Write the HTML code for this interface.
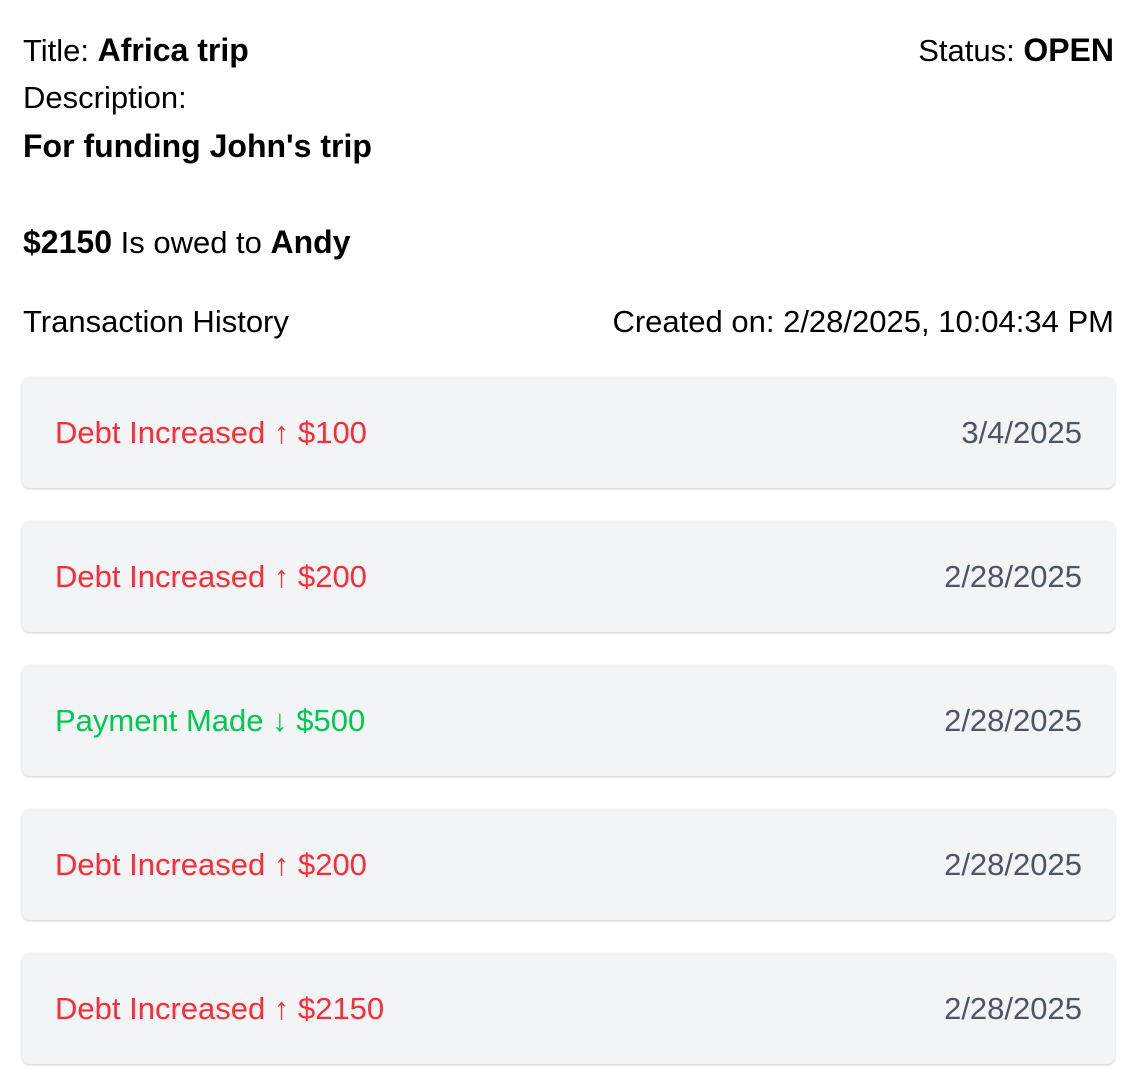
<!DOCTYPE html>
<html><head><meta charset="utf-8"><style>
body{margin:0;background:#fff;font-family:"Liberation Sans",sans-serif;font-size:31px;color:#000;width:1133px;height:1084px;overflow:hidden;position:relative}
.l{position:absolute;left:23px;line-height:48px;white-space:nowrap}
.r{position:absolute;right:19px;line-height:48px;white-space:nowrap}
b{font-weight:700;font-size:32px}
.card{position:absolute;left:22px;width:1093px;height:111px;background:#f3f4f6;border-radius:8px;box-shadow:0 1px 3px rgba(0,0,0,.12),0 1px 2px rgba(0,0,0,.08)}
.card .a{position:absolute;left:33px;top:0;line-height:111px}
.card .d{position:absolute;right:33px;top:0;line-height:111px;color:#4a5565}
.red{color:#fb2c36}.green{color:#00c950}
</style></head><body>
<div class="l" style="top:26px">Title: <b>Africa trip</b></div>
<div class="r" style="top:26px">Status: <b>OPEN</b></div>
<div class="l" style="top:74px">Description:</div>
<div class="l" style="top:122px"><b>For funding John's trip</b></div>
<div class="l" style="top:218px"><b>$2150</b> Is owed to <b>Andy</b></div>
<div class="l" style="top:298px">Transaction History</div>
<div class="r" style="top:298px">Created on: 2/28/2025, 10:04:34 PM</div>
<div class="card" style="top:377px"><span class="a red">Debt Increased ↑ $100</span><span class="d">3/4/2025</span></div>
<div class="card" style="top:521px"><span class="a red">Debt Increased ↑ $200</span><span class="d">2/28/2025</span></div>
<div class="card" style="top:665px"><span class="a green">Payment Made ↓ $500</span><span class="d">2/28/2025</span></div>
<div class="card" style="top:809px"><span class="a red">Debt Increased ↑ $200</span><span class="d">2/28/2025</span></div>
<div class="card" style="top:953px"><span class="a red">Debt Increased ↑ $2150</span><span class="d">2/28/2025</span></div>
</body></html>
